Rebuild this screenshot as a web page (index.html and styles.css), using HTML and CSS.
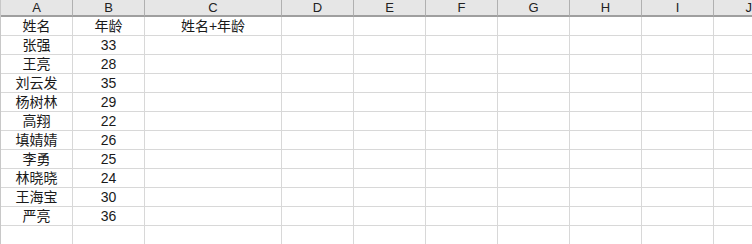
FILE: index.html
```html
<!DOCTYPE html>
<html lang="zh-CN">
<head>
  <meta charset="UTF-8">
  <title>Sheet</title>
  <link rel="stylesheet" href="styles.css">
</head>
<body>
  <div class="sheet">
    <div class="row head">
      <div class="cell">A</div><div class="cell">B</div><div class="cell wide">C</div>
      <div class="cell">D</div><div class="cell">E</div><div class="cell">F</div>
      <div class="cell">G</div><div class="cell">H</div><div class="cell">I</div>
      <div class="cell last">J</div>
    </div>
    <div id="rows"></div>
  </div>
  <script>
    const data = [
      ["姓名", "年龄", "姓名+年龄"],
      ["张强", "33"], ["王亮", "28"], ["刘云发", "35"], ["杨树林", "29"],
      ["高翔", "22"], ["填婧婧", "26"], ["李勇", "25"], ["林晓晓", "24"],
      ["王海宝", "30"], ["严亮", "36"], []
    ];
    const rows = document.getElementById("rows");
    data.forEach(r => {
      const row = document.createElement("div");
      row.className = "row";
      row.innerHTML = `
        <div class="cell">${r[0] || ""}</div>
        <div class="cell num">${r[1] || ""}</div>
        <div class="cell wide">${r[2] || ""}</div>
        <div class="cell"></div><div class="cell"></div><div class="cell"></div>
        <div class="cell"></div><div class="cell"></div><div class="cell"></div>
        <div class="cell last"></div>
      `;
      rows.appendChild(row);
    });
  </script>
</body>
</html>
```

FILE: styles.css
```css
body {
  margin: 0;
  background: #fff;
  overflow: hidden;
  font-family: "Liberation Sans", "Noto Sans CJK SC", sans-serif;
  color: #1a1a1a;
}
.sheet {
  border-left: 1px solid #c8c8c8;
  width: 751px;
}
.row {
  display: flex;
  height: 19px;
}
.cell {
  box-sizing: border-box;
  flex: 0 0 72px;
  height: 19px;
  border-right: 1px solid #d8d8d8;
  border-bottom: 1px solid #d8d8d8;
  text-align: center;
  font-size: 14px;
  line-height: 18px;
  white-space: nowrap;
  overflow: hidden;
}
.cell.wide { flex-basis: 137px; }
.cell.last { flex: 1 1 auto; border-right: none; }
/* Column header */
.row.head { height: 17px; }
.head .cell {
  height: 17px;
  background: #e6e6e6;
  border-right-color: #b0b0b0;
  border-bottom: 2px solid #9f9f9f;
  font-size: 13px;
  line-height: 15px;
  color: #222;
}
.head .cell.last { text-align: right; }
```
